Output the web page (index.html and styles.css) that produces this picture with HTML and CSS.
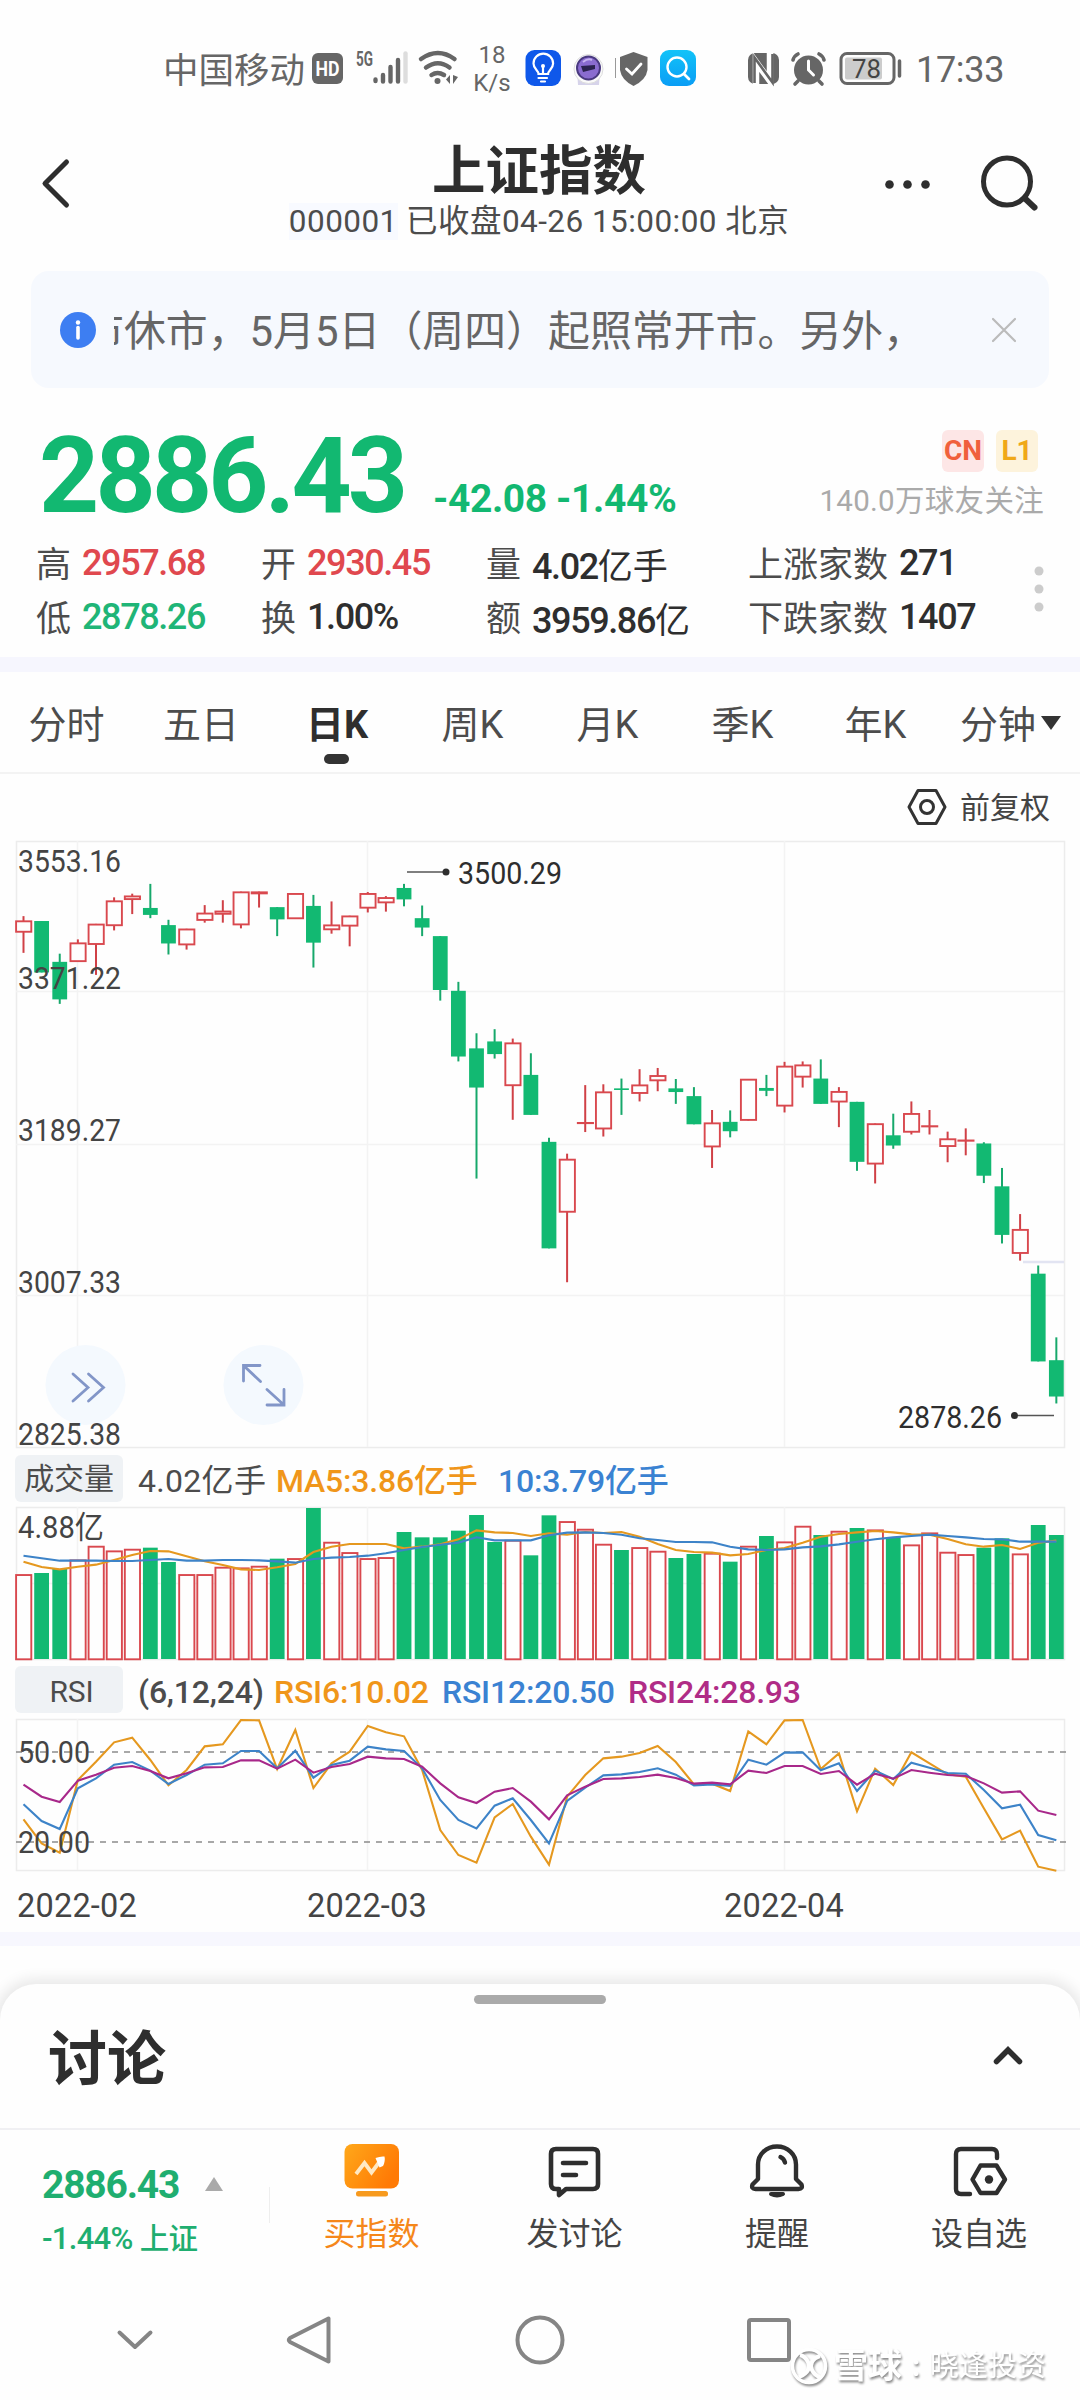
FILE: index.html
```html
<!DOCTYPE html>
<html lang="zh-CN">
<head>
  <meta charset="UTF-8">
  <title>上证指数</title>
  <link rel="stylesheet" href="styles.css">
</head>
<body>

  <!-- Status bar -->
  <div class="status-bar">
    <span class="carrier">中国移动</span>
    <svg class="status-left" width="152" height="50" viewBox="308 44 152 50">
      <rect x="312" y="53" width="31" height="31" rx="6" fill="#666"/>
      <text x="315.500" y="76" font-size="20" font-weight="700" fill="#fff" textLength="24" lengthAdjust="spacingAndGlyphs">HD</text>
      <text x="356" y="66" font-size="20" font-weight="700" fill="#666" textLength="17" lengthAdjust="spacingAndGlyphs">5G</text>
      <g stroke="#666" stroke-width="4.4" stroke-linecap="round">
        <path d="M375.5 79.500v1.500M383 75v6.500M390.500 67v14.500M398 60v21.500"/>
        <path d="M405.500 53.500v28" stroke="#ddd"/>
      </g>
      <g fill="none" stroke="#666" stroke-width="4.500" stroke-linecap="round">
        <path d="M421 59q17-12 33.500 0M426 67.500q12-8.500 23.500 0M431.500 75q6-4 12.500 0"/>
      </g>
      <circle cx="437.500" cy="81" r="3" fill="#666"/>
      <path d="M450 75v9l-4-4.500zM453 75v9l5-7z" fill="#666"/>
    </svg>
    <span class="speed">18<br>K/s</span>
    <svg class="status-apps" width="180" height="50" viewBox="520 44 180 50">
      <defs>
        <linearGradient id="sky" x1="0" y1="0" x2="0" y2="1">
          <stop offset="0" stop-color="#12c3f8"/>
          <stop offset="1" stop-color="#0a9df5"/>
        </linearGradient>
      </defs>
      <rect x="525.500" y="50" width="35.500" height="36" rx="9" fill="#0f58ea"/>
      <g fill="none" stroke="#fff" stroke-width="2.200" stroke-linecap="round">
        <path d="M538.500 74c0-4-5-5-5-10.500a9.800 9.800 0 0 1 19.600 0c0 5.500-5 6.500-5 10.500zM538.500 78h8.500M541 81.500h4M543 73v-7"/>
      </g>
      <circle cx="543" cy="66" r="2" fill="#fff"/>
      <path d="M577 70h23l-1 15h-21z" fill="#d6d3ea"/>
      <circle cx="588.500" cy="69" r="14.500" fill="#fafafa" stroke="#ddd" stroke-width="1"/>
      <circle cx="588.500" cy="68" r="11.500" fill="#8a6cd0" stroke="#4a3a80" stroke-width="2"/>
      <path d="M581 66l14-1v4l-12 3z" fill="#2b2350"/>
      <path d="M583 62q5-4 9-2" stroke="#c6b4f0" stroke-width="2" fill="none"/>
      <path d="M615.500 58v20" stroke="#999" stroke-width="1"/>
      <path d="M633.500 52l14 5v13q-1.500 10-14 16-12-6-13.500-16V57z" fill="#666"/>
      <path d="M626.500 69l5.500 5 9-10" fill="none" stroke="#fff" stroke-width="2.800" stroke-linecap="round"/>
      <rect x="660" y="50" width="36" height="36" rx="9" fill="url(#sky)"/>
      <circle cx="677" cy="67" r="9.500" fill="none" stroke="#fff" stroke-width="2.400"/>
      <path d="M684 74l5 5" stroke="#fff" stroke-width="2.800" stroke-linecap="round"/>
    </svg>
    <svg class="status-right" width="160" height="50" viewBox="744 44 160 50">
      <rect x="748" y="53" width="31" height="31" rx="7" fill="#666"/>
      <path d="M756 86V62l14 19V51" fill="none" stroke="#fff" stroke-width="6.500"/>
      <path d="M754.500 83V57.500l18 25V54" fill="none" stroke="#666" stroke-width="2.600"/>
      <circle cx="808.500" cy="70" r="14.500" fill="#666"/>
      <path d="M793 60q1-4 5-6M824 60q-1-4-5-6M798 81l-3 3M819 81l3 3" stroke="#666" stroke-width="3.600" stroke-linecap="round" fill="none"/>
      <path d="M808.500 61v9l5 5" fill="none" stroke="#fff" stroke-width="3" stroke-linecap="round"/>
      <rect x="841" y="53.500" width="53" height="30" rx="6" fill="none" stroke="#666" stroke-width="3"/>
      <rect x="845" y="57.500" width="37" height="22" rx="2" fill="#ccc"/>
      <path d="M899.500 61v15" stroke="#666" stroke-width="3.500" stroke-linecap="round"/>
      <text x="852" y="77.500" font-size="25" fill="#444" textLength="29" lengthAdjust="spacingAndGlyphs">78</text>
    </svg>
    <span class="clock">17:33</span>
  </div>

  <!-- Header -->
  <header class="header">
    <svg class="back" width="40" height="56" viewBox="36 155 40 56">
      <path d="M66.500 162L45 183.500l21.500 21.500" fill="none" stroke="#2e2e2e" stroke-width="5" stroke-linecap="round" stroke-linejoin="round"/>
    </svg>
    <div class="header-title">
      <h1>上证指数</h1>
      <p><span class="code">000001</span> 已收盘04-26 15:00:00 北京</p>
    </div>
    <svg class="header-tools" width="160" height="64" viewBox="882 150 160 64">
      <g fill="#2e2e2e">
        <circle cx="889.500" cy="184.500" r="4.300"/>
        <circle cx="907.500" cy="184.500" r="4.300"/>
        <circle cx="925.500" cy="184.500" r="4.300"/>
      </g>
      <circle cx="1007" cy="181.500" r="23.500" fill="none" stroke="#2e2e2e" stroke-width="5"/>
      <path d="M1025 198.500l9.500 9" stroke="#2e2e2e" stroke-width="6" stroke-linecap="round"/>
    </svg>
  </header>

  <!-- Notice -->
  <div class="notice">
    <svg width="36" height="36" viewBox="0 0 36 36">
      <circle cx="18" cy="18" r="18" fill="#3d7ef2"/>
      <circle cx="18" cy="10.500" r="2.200" fill="#fff"/>
      <path d="M18 15.500v10.500" stroke="#fff" stroke-width="3.600" stroke-linecap="round"/>
    </svg>
    <div class="notice-text"><span>市休市，5月5日（周四）起照常开市。另外，</span></div>
    <svg class="notice-close" width="24" height="26" viewBox="0 0 24 26">
      <path d="M1 2l22 22M23 2L1 24" stroke="#bbb" stroke-width="2.200" stroke-linecap="round"/>
    </svg>
  </div>

  <!-- Quote -->
  <section class="quote">
    <div class="quote-top">
      <span class="price">2886.43</span>
      <span class="change">-42.08 -1.44%</span>
      <div class="quote-side">
        <div class="tags"><span class="tag tag-cn">CN</span><span class="tag tag-l1">L1</span></div>
        <div class="followers">140.0万球友关注</div>
      </div>
    </div>
    <div class="stats">
      <div><label>高</label><b class="up">2957.68</b></div>
      <div><label>开</label><b class="up">2930.45</b></div>
      <div><label>量</label><b>4.02<i>亿手</i></b></div>
      <div><label>上涨家数</label><b>271</b></div>
      <svg class="more" width="10" height="50" viewBox="0 0 10 50" fill="#ccc">
        <circle cx="5" cy="7" r="4.500"/><circle cx="5" cy="25" r="4.500"/><circle cx="5" cy="43" r="4.500"/>
      </svg>
      <div><label>低</label><b class="down">2878.26</b></div>
      <div><label>换</label><b>1.00%</b></div>
      <div><label>额</label><b>3959.86<i>亿</i></b></div>
      <div><label>下跌家数</label><b>1407</b></div>
    </div>
  </section>

  <!-- Period tabs -->
  <nav class="tabs">
    <span>分时</span>
    <span>五日</span>
    <span class="active">日K</span>
    <span>周K</span>
    <span>月K</span>
    <span>季K</span>
    <span>年K</span>
    <span>分钟<em></em></span>
  </nav>

  <div class="adjust">
    <svg width="40" height="38" viewBox="0 0 40 38" fill="none" stroke="#333" stroke-width="3" stroke-linejoin="round">
      <path d="M11 2.500h18l9 16.500-9 16.500H11L2 19z"/>
      <circle cx="20" cy="19" r="6.500"/>
    </svg>
    <span>前复权</span>
  </div>

  <!-- Charts -->
  <svg id="priceChart" class="chart" width="1080" height="614" viewBox="0 838 1080 614">
    <g class="grid">
      <rect x="16.500" y="841.500" width="1048" height="606"/>
      <path d="M16 991.500H1064M16 1144.500H1064M16 1295.500H1064M77.500 841V1447M367.500 841V1447M784.500 841V1447"/>
    </g>
    <g class="round-buttons">
      <circle cx="85.500" cy="1385" r="40"/>
      <circle cx="263.500" cy="1385" r="40"/>
      <path d="M73 1374l15 13.500-15 13.500M88.500 1374l15 13.500-15 13.500"/>
      <path d="M260 1365.500h-16.500V1381M243.500 1365.500l17 16M267 1405h17v-15.500M284 1405l-17-15.500"/>
    </g>
    <path d="M1023 1262H1064" stroke="#e2e4f2" stroke-width="2.500"/>
    <g class="candles"></g>
    <g class="axis-label">
      <text x="18" y="871.500" textLength="103" lengthAdjust="spacingAndGlyphs">3553.16</text>
      <text x="18" y="988.500" textLength="103" lengthAdjust="spacingAndGlyphs">3371.22</text>
      <text x="18" y="1141" textLength="103" lengthAdjust="spacingAndGlyphs">3189.27</text>
      <text x="18" y="1292.500" textLength="103" lengthAdjust="spacingAndGlyphs">3007.33</text>
      <text x="18" y="1444.500" textLength="103" lengthAdjust="spacingAndGlyphs">2825.38</text>
    </g>
    <g class="extreme">
      <path d="M407 872H444M1015 1415.500H1054"/>
      <circle cx="446" cy="872" r="3.500"/>
      <circle cx="1014.500" cy="1415.500" r="3.500"/>
      <text x="458" y="883.500" textLength="104" lengthAdjust="spacingAndGlyphs">3500.29</text>
      <text x="898" y="1427.500" textLength="104" lengthAdjust="spacingAndGlyphs">2878.26</text>
    </g>
  </svg>

  <div class="legend">
    <span class="chip">成交量</span>
    <span class="l-vol">4.02<i>亿手</i></span>
    <span class="l-ma5">MA5:3.86<i>亿手</i></span>
    <span class="l-ma10">10:3.79<i>亿手</i></span>
  </div>

  <svg id="volumeChart" class="chart" width="1080" height="160" viewBox="0 1504 1080 160">
    <g class="grid">
      <rect x="16.500" y="1507.500" width="1048" height="152"/>
      <path d="M16 1583.500H1064M77.500 1507V1659M367.500 1507V1659M784.500 1507V1659"/>
    </g>
    <g class="bars"></g>
    <g class="lines"></g>
    <g class="axis-label">
      <text x="18" y="1537.500" textLength="86" lengthAdjust="spacingAndGlyphs">4.88亿</text>
    </g>
  </svg>

  <div class="legend legend-rsi">
    <span class="chip">RSI</span>
    <span class="l-rsi">(6,12,24)</span>
    <span class="l-rsi6">RSI6:10.02</span>
    <span class="l-rsi12">RSI12:20.50</span>
    <span class="l-rsi24">RSI24:28.93</span>
  </div>

  <svg id="rsiChart" class="chart" width="1080" height="158" viewBox="0 1716 1080 158">
    <g class="grid">
      <rect x="16.500" y="1719.500" width="1048" height="151"/>
      <path d="M77.500 1719V1870M367.500 1719V1870M784.500 1719V1870"/>
    </g>
    <path class="dashed" d="M16 1752H1066M16 1842H1066"/>
    <g class="lines"></g>
    <g class="axis-label">
      <text x="18" y="1763" textLength="72" lengthAdjust="spacingAndGlyphs">50.00</text>
      <text x="18" y="1853" textLength="72" lengthAdjust="spacingAndGlyphs">20.00</text>
    </g>
  </svg>

  <div class="dates">
    <span>2022-02</span>
    <span>2022-03</span>
    <span>2022-04</span>
  </div>

  <!-- Discussion sheet -->
  <section class="sheet-wrap">
    <div class="sheet">
      <div class="handle"></div>
      <div class="sheet-head">
        <h2>讨论</h2>
        <svg width="34" height="22" viewBox="0 0 34 22">
          <path d="M5.500 17.500L17 6l11.500 11.500" fill="none" stroke="#2e2e2e" stroke-width="5.500" stroke-linecap="round"/>
        </svg>
      </div>
    </div>
  </section>

  <!-- Bottom bar -->
  <footer class="bottom-bar">
    <div class="mini-quote">
      <div class="mini-price">2886.43 <em></em></div>
      <div class="mini-change">-1.44% <i>上证</i></div>
    </div>
    <div class="action buy">
      <svg width="60" height="60" viewBox="0 0 60 60">
        <defs>
          <linearGradient id="buyGrad" x1="0" y1="0" x2="1" y2="0.500">
            <stop offset="0" stop-color="#ffa81a"/>
            <stop offset="1" stop-color="#ff7a05"/>
          </linearGradient>
        </defs>
        <rect x="2.500" y="3" width="54.500" height="44.500" rx="8" fill="url(#buyGrad)"/>
        <rect x="14" y="50" width="32" height="5.500" rx="2.500" fill="#f79a1e"/>
        <path d="M14 33l8.500-11 7 9.500 7.500-10" fill="none" stroke="#ffe9c4" stroke-width="3.800"/>
        <path d="M33.500 17q5-2 9-1.500 1 5-1.500 9.500l-3.500 1.500z" fill="#fff"/>
      </svg>
      <span>买指数</span>
    </div>
    <div class="action">
      <svg width="60" height="60" viewBox="0 0 60 60" fill="none" stroke="#2e2e2e" stroke-width="4.600" stroke-linecap="round" stroke-linejoin="round">
        <path d="M11 8h37q5 0 5 5v30q0 5-5 5H21l-7 6v-6h-3q-5 0-5-5V13q0-5 5-5z"/>
        <path d="M18 22h23M18 34h13"/>
      </svg>
      <span>发讨论</span>
    </div>
    <div class="action">
      <svg width="60" height="60" viewBox="0 0 60 60" fill="none" stroke="#2e2e2e" stroke-width="4.400" stroke-linecap="round" stroke-linejoin="round">
        <path d="M30 5.500c-10.500 0-19 7.500-19 18V38l-5.500 5.500q-1.500 4.500 3 4.500h43q4.500 0 3-4.500L49 38V23.500c0-10.500-8.500-18-19-18z"/>
        <path d="M33.500 16q3.500 1.500 4.500 5.500"/>
        <path d="M24 53q6 3 12 0z" stroke-width="4"/>
      </svg>
      <span>提醒</span>
    </div>
    <div class="action">
      <svg width="60" height="60" viewBox="0 0 60 60" fill="none" stroke="#2e2e2e" stroke-width="4.400" stroke-linecap="round" stroke-linejoin="round">
        <path d="M48 17v-4q0-5-5-5H12q-5 0-5 5v35q0 5 5 5h9"/>
        <path d="M31.500 24.500h16L56 38.500 47.500 52h-16l-8-13.500z"/>
        <circle cx="40" cy="38.500" r="4.200" fill="#2e2e2e" stroke="none"/>
      </svg>
      <span>设自选</span>
    </div>
  </footer>

  <!-- System navigation -->
  <div class="nav-bar">
    <svg width="40" height="50" viewBox="0 0 40 50"><path d="M4.500 17.500L20 32l15.500-14.500"/></svg>
    <svg width="46" height="50" viewBox="0 0 46 50"><path d="M42.500 3.500v43L4 27q-2.500-2 0-4z"/></svg>
    <svg width="50" height="50" viewBox="0 0 50 50"><circle cx="25" cy="25" r="22.500"/></svg>
    <svg width="46" height="50" viewBox="0 0 46 50"><rect x="3" y="5" width="40" height="40" rx="2"/></svg>
  </div>

  <div class="watermark">
    <svg width="42" height="42" viewBox="0 0 42 42" fill="none" stroke="#fff" stroke-width="3.500">
      <circle cx="21" cy="21" r="16.500"/>
      <path d="M12 10q5 1 8 7 2 4 0 8t-9 7M32 32q-5-1-8-7-2-4 0-8t8-6" stroke-width="4"/>
    </svg>
    <b>雪球</b><i>:</i><span>晓逢投资</span>
  </div>

  <script src="charts.js"></script>
</body>
</html>
```

FILE: styles.css
```css
* {
  box-sizing: border-box;
}
body {
  margin: 0;
  width: 1080px;
  height: 2400px;
  overflow: hidden;
  position: relative;
  background-color: #fefefe;
  color: #2e2e2e;
  font-family: Roboto, 'Noto Sans CJK SC', sans-serif;
}
h1, h2, p {
  margin: 0;
}
i, em {
  font-style: normal;
}
svg {
  display: block;
  flex: none;
}

/* status bar */
.status-bar {
  height: 130px;
  padding: 8px 0 0 163px;
  display: flex;
  align-items: center;
  color: #666;
  white-space: nowrap;
}
.carrier {
  width: 145px;
  margin-top: -3px;
  font-size: 35.500px;
}
.speed {
  width: 60px;
  font-size: 24px;
  line-height: 28px;
  text-align: center;
  padding-left: 4px;
}
.status-right {
  margin-left: 44px;
}
.clock {
  margin-left: 12px;
  margin-top: 2px;
  font-size: 36px;
  letter-spacing: -0.300px;
}

/* header */
.header {
  height: 141px;
  padding: 5px 38px 0 36px;
  display: flex;
  justify-content: space-between;
  align-items: flex-start;
}
.back {
  margin-top: 20px;
  margin-right: 120px;
}
.header-title {
  padding-top: 3px;
  text-align: center;
}
.header-title h1 {
  font-size: 53.500px;
  line-height: 68px;
}
.header-title p {
  font-size: 31.500px;
  line-height: 32px;
  letter-spacing: 0.450px;
  color: #4c4c4c;
  white-space: nowrap;
}
.code {
  background-color: #f8faff;
}
.header-tools {
  margin-top: 15px;
}

/* notice */
.notice {
  margin: 0 31px;
  height: 117px;
  padding: 0 33px 0 29px;
  display: flex;
  align-items: center;
  background-color: #f6f9fe;
  border-radius: 18px;
}
.notice-text {
  width: 816px;
  margin-left: 18px;
  margin-top: -4px;
  overflow: hidden;
  white-space: nowrap;
  font-size: 41.900px;
  color: #666;
}
.notice-text span {
  margin-left: -32px;
}
.notice-close {
  margin-left: auto;
}

/* quote */
.quote {
  height: 284px;
  padding: 36px 36px 0;
  border-bottom: 15px solid #f6f6fe;
}
.quote-top {
  height: 112px;
  display: flex;
  align-items: baseline;
  color: #12b871;
  font-weight: 700;
}
.price {
  width: 397px;
  padding-left: 3px;
  font-size: 105px;
  line-height: 106px;
  letter-spacing: -3.800px;
}
.change {
  font-size: 39px;
  letter-spacing: -0.400px;
  white-space: nowrap;
}
.quote-side {
  align-self: flex-start;
  margin-left: auto;
  padding-top: 6px;
  font-weight: 400;
}
.tags {
  display: flex;
  justify-content: flex-end;
  gap: 12px;
  padding-right: 6px;
}
.tag {
  width: 42px;
  height: 42px;
  line-height: 42px;
  border-radius: 6px;
  font-size: 28px;
  font-weight: 700;
  text-align: center;
}
.tag-cn {
  background-color: #fde6e6;
  color: #f0603c;
}
.tag-l1 {
  background-color: #fdf3dc;
  color: #f0a818;
}
.followers {
  margin-top: 9px;
  font-size: 29.500px;
  line-height: 40px;
  letter-spacing: 0.300px;
  color: #aaa;
}
.stats {
  display: grid;
  grid-template-columns: 225px 225px 262px 1fr 10px;
  grid-auto-rows: 54px;
  align-items: center;
  white-space: nowrap;
}
.stats div {
  display: flex;
  align-items: center;
}
.stats label {
  font-size: 35px;
  color: #4c4c4c;
  margin-top: -3px;
  margin-right: 11px;
}
.stats b {
  font-size: 36px;
  font-weight: 500;
  letter-spacing: -1.400px;
}
.stats i {
  font-size: 35px;
  font-weight: 400;
  letter-spacing: 0;
}
.stats b.up {
  color: #e0484e;
}
.stats b.down {
  color: #1fb577;
}
.more {
  grid-column: 5;
  grid-row: 1 / 3;
  margin-top: -3px;
}

/* tabs */
.tabs {
  height: 102px;
  padding-top: 24px;
  display: grid;
  grid-template-columns: 133px 136px 136px 135px 135px 135px 131px 139px;
  justify-items: center;
  border-bottom: 2px solid #f3f3f3;
  font-size: 38px;
  line-height: 58px;
  color: #4c4c4c;
  white-space: nowrap;
}
.tabs .active {
  font-weight: 700;
  color: #2e2e2e;
}
.tabs .active::after {
  content: "";
  display: block;
  width: 25px;
  height: 10px;
  margin: 0 auto;
  border-radius: 5px;
  background-color: #333;
}
.tabs em {
  display: inline-block;
  margin-left: 5px;
  vertical-align: 8px;
  border: 10px solid transparent;
  border-top: 14px solid #333;
  border-bottom: 0;
}
.adjust {
  height: 64px;
  padding: 2px 30px 0 0;
  display: flex;
  justify-content: flex-end;
  align-items: center;
  gap: 13px;
  font-size: 30px;
  color: #444;
}
.adjust span {
  margin-top: -4px;
}

/* charts */
text {
  font-family: Roboto, 'Noto Sans CJK SC', sans-serif;
}
.grid {
  fill: none;
  stroke: #f3f3f3;
  stroke-width: 1.500;
}
.grid rect {
  stroke: #ececec;
}
.round-buttons circle {
  fill: #f4f9fe;
}
.round-buttons path {
  fill: none;
  stroke: #8296c8;
  stroke-width: 2.800;
  stroke-linecap: round;
}
.axis-label text {
  font-size: 30.500px;
  fill: #444;
}
.extreme {
  fill: #2e2e2e;
}
.extreme path {
  stroke: #555;
  stroke-width: 1.500;
}
.extreme text {
  font-size: 31px;
}
.dashed {
  stroke: #8c8c8c;
  stroke-width: 1.600;
  stroke-dasharray: 6 6;
}
.rise {
  fill: #fefefe;
  stroke: #d9484e;
  stroke-width: 1.900;
}
.fall {
  fill: #12b972;
  stroke: none;
}
.wick {
  stroke-width: 2;
}
.wick.rise {
  stroke: #d04046;
}
.wick.fall {
  stroke: #17a86b;
}
.line {
  fill: none;
  stroke-width: 2.100;
}
.orange { stroke: #e5981f; }
.blue { stroke: #3d83c8; }
.purple { stroke: #a8288a; }

.legend {
  height: 52px;
  padding: 3px 0 0 15px;
  display: flex;
  align-items: flex-start;
  font-size: 32px;
  font-weight: 500;
  line-height: 52px;
  white-space: nowrap;
  letter-spacing: -0.200px;
}
.chip {
  width: 108px;
  height: 47px;
  margin-right: 15px;
  line-height: 48px;
  border-radius: 6px;
  background-color: #eff2f5;
  color: #4c4c4c;
  font-size: 30px;
  font-weight: 400;
  text-align: center;
}
.l-vol {
  width: 138px;
  color: #4c4c4c;
  font-weight: 400;
  letter-spacing: 0.300px;
}
.l-ma5 {
  width: 222px;
}
.l-ma5, .l-rsi6 {
  color: #f0961a;
}
.l-ma10, .l-rsi12 {
  color: #3a82d2;
}
.legend-rsi {
  padding-top: 2px;
}
.legend-rsi .chip {
  line-height: 51px;
  padding-left: 5px;
}
.l-rsi {
  width: 136px;
  color: #4c4c4c;
}
.l-rsi6 {
  width: 168px;
}
.l-rsi12 {
  width: 186px;
}
.l-rsi24 {
  color: #b02c86;
}
.dates {
  height: 72px;
  padding: 12px 0 0 17px;
  display: flex;
  font-size: 32.500px;
  letter-spacing: 0.200px;
  line-height: 40px;
  color: #444;
  border-bottom: 14px solid #f7f7fe;
}
.dates span:nth-child(1) { width: 290px; }
.dates span:nth-child(2) { width: 417px; }

/* discussion sheet */
.sheet-wrap {
  height: 184px;
  padding-top: 38px;
  overflow: hidden;
}
.sheet {
  height: 146px;
  border-radius: 36px 36px 0 0;
  border-bottom: 2px solid #f0f0f3;
  background-color: #fefefe;
  box-shadow: 0 0 14px 5px rgba(0, 0, 0, 0.09);
  overflow: hidden;
}
.handle {
  width: 132px;
  height: 9px;
  margin: 11px auto 0;
  border-radius: 5px;
  background-color: #aaa;
}
.sheet-head {
  padding: 14px 55px 0 48px;
  display: flex;
  justify-content: space-between;
  align-items: center;
}
.sheet-head h2 {
  font-size: 59px;
  line-height: 84px;
}
.sheet-head svg {
  margin-top: -10px;
}

/* bottom bar */
.bottom-bar {
  height: 150px;
  display: grid;
  grid-template-columns: 270px 203px 203px 202px 202px;
}
.mini-quote {
  padding: 32px 0 0 42px;
  color: #1fae70;
  font-weight: 700;
  background: linear-gradient(#eee, #eee) right 57px / 1.500px 36px no-repeat;
}
.mini-price {
  font-size: 39px;
  line-height: 46px;
  letter-spacing: -1.200px;
}
.mini-price em {
  display: inline-block;
  margin-left: 17px;
  vertical-align: 7px;
  border: 9px solid transparent;
  border-bottom: 14px solid #aaa;
  border-top: 0;
}
.mini-change {
  margin-top: 8px;
  font-size: 31px;
  font-weight: 500;
  line-height: 46px;
  letter-spacing: -0.700px;
}
.mini-change i {
  font-size: 29.500px;
}
.action {
  padding-top: 11px;
  display: flex;
  flex-direction: column;
  align-items: center;
  font-size: 32px;
  line-height: 46px;
  color: #444;
}
.action span {
  margin-top: 10px;
}
.action.buy span {
  color: #f5871a;
}

/* system navigation */
.nav-bar {
  height: 119px;
  padding: 35px 0 0 115px;
  display: flex;
  fill: none;
  stroke: #858585;
  stroke-width: 4;
  stroke-linejoin: round;
  stroke-linecap: round;
}
.nav-bar svg:nth-child(2) { margin-left: 131px; }
.nav-bar svg:nth-child(3) { margin-left: 183px; }
.nav-bar svg:nth-child(4) { margin-left: 181px; }

.watermark {
  position: absolute;
  left: 788px;
  top: 2343px;
  display: flex;
  align-items: center;
  font-size: 29px;
  line-height: 46px;
  color: #fff;
  filter: drop-shadow(1px 2px 1px rgba(0, 0, 0, 0.45));
}
.watermark b {
  margin-left: 4px;
  font-size: 34px;
}
.watermark i {
  width: 28px;
  font-weight: 700;
  text-align: center;
}
```

FILE: charts.js
```js
const NS = "http://www.w3.org/2000/svg";
const FIRST_X = 23.5;
const STEP = 18.12;

const x = i => FIRST_X + i * STEP;
const priceY = v => 830 + v / 2.45;
const subY = v => 1450 + v / 3;

// direction (r = rise, g = fall), high, body top, body bottom, low
const candles = [
  ["r", 211, 222, 251, 301], ["g", 223, 223, 349, 349], ["g", 303, 323, 415, 426], ["r", 268, 276, 323, 323],
  ["r", 230, 230, 281, 355], ["r", 165, 173, 235, 246], ["r", 156, 161, 171, 206], ["g", 132, 191, 208, 216],
  ["g", 220, 233, 278, 305], ["r", 242, 242, 282, 293], ["r", 184, 203, 222, 227], ["r", 172, 198, 207, 227],
  ["r", 151, 151, 233, 241], ["r", 151, 151, 157, 190], ["g", 189, 189, 219, 260], ["r", 155, 155, 218, 218],
  ["g", 159, 186, 276, 337], ["r", 175, 232, 245, 254], ["r", 210, 210, 236, 285], ["r", 152, 155, 192, 202],
  ["r", 162, 165, 179, 200], ["g", 132, 142, 170, 187], ["g", 185, 216, 239, 260], ["g", 260, 260, 392, 418],
  ["g", 372, 394, 555, 567], ["g", 498, 535, 631, 854], ["g", 488, 518, 549, 560], ["r", 511, 521, 627, 710],
  ["g", 547, 600, 698, 698], ["g", 754, 764, 1025, 1025], ["r", 793, 806, 937, 1108], ["r", 625, 716, 717, 740],
  ["r", 623, 641, 733, 751], ["g", 609, 633, 637, 698], ["r", 586, 624, 646, 665], ["r", 583, 601, 615, 640],
  ["g", 610, 633, 642, 671], ["g", 630, 652, 721, 721], ["r", 686, 717, 777, 828], ["g", 687, 715, 738, 753],
  ["r", 610, 610, 712, 712], ["g", 600, 632, 639, 652], ["r", 568, 578, 677, 692], ["r", 567, 575, 606, 631],
  ["g", 562, 609, 671, 671], ["r", 630, 640, 667, 728], ["g", 666, 666, 813, 835], ["r", 719, 719, 819, 866],
  ["g", 695, 748, 773, 781], ["r", 665, 694, 741, 746], ["r", 686, 724, 726, 746], ["r", 739, 756, 776, 814],
  ["r", 731, 759, 763, 797], ["g", 765, 768, 847, 865], ["g", 828, 873, 992, 1013], ["r", 941, 978, 1038, 1055],
  ["g", 1067, 1087, 1302, 1302], ["g", 1243, 1299, 1388, 1405]
];

const volumes = [
  373, 369, 357, 329, 288, 302, 297, 293, 336, 373, 373, 351, 353, 348, 326, 325, 174, 276, 307, 325,
  322, 246, 262, 262, 242, 195, 276, 270, 316, 196, 214, 237, 282, 300, 292, 303, 324, 312, 309, 335,
  288, 258, 275, 228, 255, 243, 234, 239, 262, 284, 248, 306, 313, 293, 265, 311, 225, 255
];
const ma5 = [
  335, 351, 358, 350, 344, 330, 315, 303, 304, 319, 334, 345, 358, 360, 352, 342, 306, 290, 282, 282,
  282, 295, 290, 283, 268, 241, 247, 249, 258, 250, 254, 246, 249, 246, 260, 282, 300, 306, 308, 316,
  312, 300, 294, 278, 260, 252, 247, 243, 247, 253, 254, 267, 283, 290, 285, 297, 278, 272
];
const ma10 = [
  317, 325, 332, 332, 332, 333, 333, 330, 327, 332, 332, 330, 330, 331, 334, 338, 327, 323, 321, 317,
  310, 300, 291, 284, 278, 262, 271, 271, 271, 256, 248, 247, 249, 254, 265, 270, 276, 276, 277, 290,
  298, 300, 298, 292, 289, 283, 275, 268, 262, 258, 254, 258, 262, 267, 268, 275, 275, 275
];

const rsi6 = [
  1108, 1180, 1208, 990, 935, 877, 863, 930, 1006, 960, 889, 883, 810, 811, 957, 840, 1014, 940, 905, 828,
  847, 859, 960, 1140, 1215, 1238, 1102, 1062, 1160, 1244, 1040, 975, 925, 920, 909, 888, 936, 1003, 1001, 1023,
  844, 883, 811, 810, 957, 910, 1084, 956, 1005, 907, 940, 973, 980, 1075, 1168, 1142, 1250, 1262
];
const rsi12 = [
  1063, 1113, 1137, 1015, 985, 944, 936, 962, 1002, 975, 944, 940, 903, 903, 955, 902, 983, 945, 932, 890,
  898, 903, 955, 1050, 1110, 1135, 1067, 1045, 1110, 1180, 1053, 1013, 976, 973, 966, 955, 974, 1006, 1003, 1008,
  929, 944, 908, 907, 961, 940, 1023, 962, 987, 938, 953, 969, 971, 1020, 1075, 1064, 1155, 1171
];
const rsi24 = [
  1004, 1040, 1056, 992, 974, 953, 948, 963, 985, 970, 952, 951, 931, 931, 956, 929, 968, 951, 942, 920,
  925, 927, 950, 1000, 1042, 1059, 1025, 1014, 1055, 1108, 1036, 1010, 987, 985, 981, 974, 984, 1001, 998, 1003,
  962, 969, 948, 948, 972, 963, 1004, 971, 986, 960, 968, 975, 978, 1000, 1028, 1024, 1082, 1095
];

function add(parent, tag, attrs) {
  const el = document.createElementNS(NS, tag);
  for (const key in attrs) {
    el.setAttribute(key, attrs[key]);
  }
  parent.appendChild(el);
}

function drawBox(parent, dir, cx, top, bottom) {
  if (dir === "g") {
    add(parent, "rect", { class: "fall", x: cx - 7.4, y: top, width: 14.8, height: bottom - top });
  } else {
    add(parent, "rect", { class: "rise", x: cx - 7.4, y: top + 0.7, width: 15.2, height: Math.max(bottom - top - 1.4, 0.2) });
  }
}

function drawLine(selector, values, color) {
  const points = values.map((v, i) => `${x(i)},${subY(v)}`).join(" ");
  add(document.querySelector(selector), "polyline", { class: `line ${color}`, points: points });
}

const candleGroup = document.querySelector("#priceChart .candles");
candles.forEach(([dir, high, top, bottom, low], i) => {
  const cls = dir === "g" ? "wick fall" : "wick rise";
  add(candleGroup, "path", { class: cls, d: `M${x(i)} ${priceY(high)}V${priceY(low)}` });
  drawBox(candleGroup, dir, x(i), priceY(top), priceY(bottom));
});

const barGroup = document.querySelector("#volumeChart .bars");
volumes.forEach((v, i) => {
  drawBox(barGroup, candles[i][0], x(i), subY(v), candles[i][0] === "g" ? 1659 : 1660);
});

drawLine("#volumeChart .lines", ma5, "orange");
drawLine("#volumeChart .lines", ma10, "blue");
drawLine("#rsiChart .lines", rsi6, "orange");
drawLine("#rsiChart .lines", rsi12, "blue");
drawLine("#rsiChart .lines", rsi24, "purple");
```
